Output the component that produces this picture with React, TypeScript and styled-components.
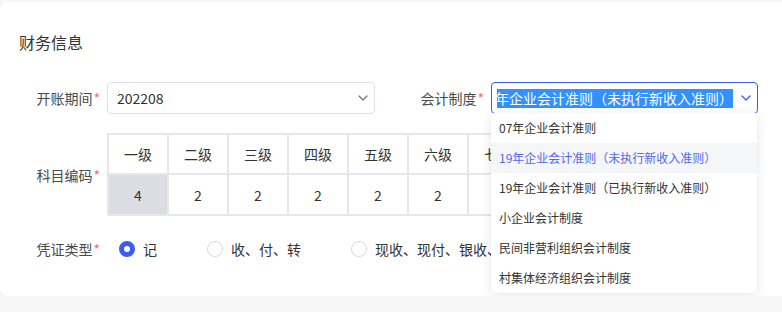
import React from "react";
import styled, { createGlobalStyle } from "styled-components";

const GlobalStyle = createGlobalStyle`
  * { box-sizing: border-box; }
  body {
    margin: 0;
    background: #ffffff;
    font-family: "Noto Sans CJK SC", "Liberation Sans", sans-serif;
    color: #333333;
  }
`;

const levels = ["一级", "二级", "三级", "四级", "五级", "六级", "七级"];
const lengths = [4, 2, 2, 2, 2, 2, 2];

const options = [
  "07年企业会计准则",
  "19年企业会计准则（未执行新收入准则）",
  "19年企业会计准则（已执行新收入准则）",
  "小企业会计制度",
  "民间非营利组织会计制度",
  "村集体经济组织会计制度"
];

const voucherTypes = ["记", "收、付、转", "现收、现付、银收、银付、转"];

const Chevron = ({ color }: { color: string }) => (
  <svg width="12" height="12" viewBox="0 0 12 12" fill="none">
    <path d="M2 4l4 4 4-4" stroke={color} strokeWidth="1.3" strokeLinecap="round" strokeLinejoin="round" />
  </svg>
);

const App = () => {
  return (
    <Page>
      <GlobalStyle />
      <Card>
        <Title>财务信息</Title>

        <Row>
          <FormItem>
            <Label width={88}>
              开账期间<Star>*</Star>
            </Label>
            <Select width={268}>
              <SelectText>202208</SelectText>
              <Chevron color="#777777" />
            </Select>
          </FormItem>
          <FormItem>
            <Label width={116}>
              会计制度<Star>*</Star>
            </Label>
            <DropdownAnchor>
              <Select width={267} active>
                <Scroller>
                  <Highlight>{options[1]}</Highlight>
                </Scroller>
                <Chevron color="#3d5af1" />
              </Select>
              <Menu>
                {options.map((opt, i) => (
                  <MenuItem key={opt} selected={i === 1}>
                    {opt}
                  </MenuItem>
                ))}
              </Menu>
            </DropdownAnchor>
          </FormItem>
        </Row>

        <CodeRow>
          <Label width={88}>
            科目编码<Star>*</Star>
          </Label>
          <LevelTable cols={levels.length}>
            {levels.map((l) => (
              <Cell key={l}>{l}</Cell>
            ))}
            {lengths.map((n, i) => (
              <Cell key={i} muted={i === 0}>
                {n}
              </Cell>
            ))}
          </LevelTable>
        </CodeRow>

        <RadioRow>
          <Label width={88}>
            凭证类型<Star>*</Star>
          </Label>
          <RadioGroup>
            {voucherTypes.map((t, i) => (
              <RadioOption key={t}>
                <RadioDot checked={i === 0} />
                {t}
              </RadioOption>
            ))}
          </RadioGroup>
        </RadioRow>
      </Card>
    </Page>
  );
};

const Page = styled.div`
  background: #f5f6f8;
  padding: 2px 0 16px;
  width: 782px;
`;

const Card = styled.div`
  background: #ffffff;
  border-radius: 8px 0 0 8px;
  height: 294px;
  padding: 30px 0 0 19px;
  overflow: hidden;
`;

const Title = styled.div`
  font-size: 16px;
  line-height: 20px;
  color: #333333;
`;

const Row = styled.div`
  display: flex;
  align-items: center;
  margin-top: 30px;
`;

const FormItem = styled.div`
  display: flex;
  align-items: center;
`;

const Label = styled.div<{ width: number }>`
  width: ${({ width }) => width}px;
  padding-right: 7px;
  text-align: right;
  font-size: 14px;
  line-height: 20px;
  color: #4a4a4a;
  flex-shrink: 0;
  white-space: nowrap;
`;

const Star = styled.span`
  color: #f56c6c;
  margin-left: 1px;
`;

const Select = styled.div<{ width: number; active?: boolean }>`
  width: ${({ width }) => width}px;
  height: 32px;
  border: 1px solid ${({ active }) => (active ? "#3d5af1" : "#dcdfe6")};
  border-radius: 4px;
  display: flex;
  align-items: center;
  justify-content: space-between;
  padding: 0 5px 0 9px;
  background: #ffffff;
  gap: 7px;
`;

const SelectText = styled.span`
  font-size: 14px;
  color: #333333;
`;

const DropdownAnchor = styled.div`
  position: relative;
`;

const Scroller = styled.div`
  flex: 1;
  overflow: hidden;
  display: flex;
  justify-content: flex-end;
  margin-left: -4px;
`;

const Highlight = styled.span`
  flex-shrink: 0;
  background: #3390ff;
  color: #ffffff;
  font-size: 14px;
  line-height: 19px;
  white-space: nowrap;
`;

const Menu = styled.div`
  position: absolute;
  top: 31px;
  left: 0;
  width: 266px;
  background: #ffffff;
  border-radius: 4px;
  box-shadow: 0 2px 12px rgba(0, 0, 0, 0.1);
  z-index: 10;
`;

const MenuItem = styled.div<{ selected?: boolean }>`
  height: 30px;
  line-height: 30px;
  padding: 0 8px;
  font-size: 12px;
  white-space: nowrap;
  color: ${({ selected }) => (selected ? "#5266f2" : "#333333")};
  background: ${({ selected }) => (selected ? "#f5f6f8" : "#ffffff")};
`;

const CodeRow = styled.div`
  display: flex;
  align-items: center;
  margin-top: 19px;
`;

const LevelTable = styled.div<{ cols: number }>`
  display: grid;
  grid-template-columns: repeat(${({ cols }) => cols}, 58px);
  grid-template-rows: 38px 39px;
  gap: 2px;
  padding: 2px;
  background: #e6e7eb;
`;

const Cell = styled.div<{ muted?: boolean }>`
  display: flex;
  align-items: center;
  justify-content: center;
  font-size: 14px;
  color: #333333;
  background: ${({ muted }) => (muted ? "#dcdde2" : "#ffffff")};
`;

const RadioRow = styled.div`
  display: flex;
  align-items: center;
  margin-top: 17px;
  height: 32px;
`;

const RadioGroup = styled.div`
  display: flex;
  align-items: center;
  gap: 50px;
  padding-left: 12px;
`;

const RadioOption = styled.label`
  display: flex;
  align-items: center;
  gap: 8px;
  font-size: 14px;
  color: #333333;
  white-space: nowrap;
`;

const RadioDot = styled.span<{ checked?: boolean }>`
  width: 16px;
  height: 16px;
  border-radius: 50%;
  background: #ffffff;
  border: ${({ checked }) => (checked ? "5px solid #3a5cf5" : "1px solid #d9d9d9")};
`;

export default App;
